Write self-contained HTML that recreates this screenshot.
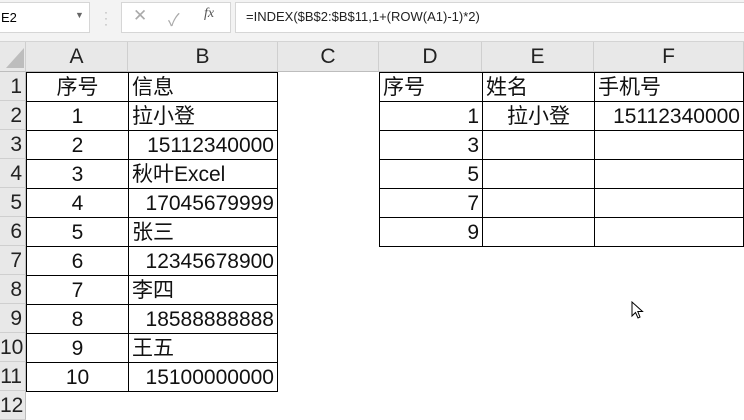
<!DOCTYPE html>
<html><head><meta charset="utf-8"><style>
body{margin:0;width:744px;height:404px;overflow:hidden;background:#fff;position:relative;font-family:"Liberation Sans","Noto Sans CJK SC",sans-serif}
.a{position:absolute;box-sizing:border-box}
.top{left:0;top:0;width:744px;height:42px;background:#f3f3f3;border-bottom:1px solid #d4d4d4}
.box{background:#fff;border:1px solid #d6d6d6;top:2px;height:31px}
.hdr{top:42px;height:30px;background:#e8e8e8;border-right:1px solid #cfcfcf;border-bottom:1px solid #bdbdbd;font-size:21px;color:#222;text-align:center;line-height:30px}
.rh{left:0;width:26px;height:29px;background:#e8e8e8;border-right:1px solid #bdbdbd;border-bottom:1px solid #cfcfcf;font-size:21px;color:#222;line-height:29px;text-align:right;padding-right:3px;overflow:hidden;white-space:nowrap}
.c{font-size:21px;line-height:29px;color:#111;border:1px solid #000;white-space:nowrap;overflow:hidden;height:30px}
.ce{text-align:center}.r{text-align:right;padding-right:3px}.l{padding-left:3px}
</style></head><body>
<div class="a top"></div>
<div class="a box" style="left:-2px;width:92px;font-size:13px;line-height:29px;padding-left:2px">E2</div>
<div class="a" style="left:75px;top:10px;font-size:9px;color:#666">▼</div>
<div class="a" style="left:104px;top:9px;font-size:12px;color:#aaa;line-height:6px">·<br>·<br>·</div>
<div class="a box" style="left:121px;width:110px"></div>
<div class="a" style="left:133px;top:6px;font-size:17px;color:#aaa">✕</div>
<div class="a" style="left:168px;top:6px;font-size:17px;color:#aaa">✓</div>
<div class="a" style="left:204px;top:6px;font-size:14px;color:#555;font-style:italic;font-family:'Liberation Serif',serif">fx</div>
<div class="a box" style="left:235px;width:512px;font-size:13px;line-height:27px;padding-left:10px;color:#222">=INDEX($B$2:$B$11,1+(ROW(A1)-1)*2)</div>
<div class="a hdr" style="left:0;width:26px"><svg width="24" height="28" style="position:absolute;left:2px;top:0"><polygon points="22,6 22,26 4,26" fill="#bdbdbd"/></svg></div>
<div class="a hdr" style="left:26px;width:102px">A</div>
<div class="a hdr" style="left:128px;width:150px">B</div>
<div class="a hdr" style="left:278px;width:101px">C</div>
<div class="a hdr" style="left:379px;width:103px">D</div>
<div class="a hdr" style="left:482px;width:112px">E</div>
<div class="a hdr" style="left:594px;width:150px">F</div>
<div class="a rh" style="top:72px">1</div>
<div class="a rh" style="top:101px">2</div>
<div class="a rh" style="top:130px">3</div>
<div class="a rh" style="top:159px">4</div>
<div class="a rh" style="top:188px">5</div>
<div class="a rh" style="top:217px">6</div>
<div class="a rh" style="top:246px">7</div>
<div class="a rh" style="top:275px">8</div>
<div class="a rh" style="top:304px">9</div>
<div class="a rh" style="top:333px">10</div>
<div class="a rh" style="top:362px">11</div>
<div class="a rh" style="top:391px">12</div>
<div class="a c ce" style="left:26px;top:72px;width:103px">序号</div><div class="a c l" style="left:128px;top:72px;width:150px">信息</div>
<div class="a c ce" style="left:26px;top:101px;width:103px">1</div><div class="a c l" style="left:128px;top:101px;width:150px">拉小登</div>
<div class="a c ce" style="left:26px;top:130px;width:103px">2</div><div class="a c r" style="left:128px;top:130px;width:150px">15112340000</div>
<div class="a c ce" style="left:26px;top:159px;width:103px">3</div><div class="a c l" style="left:128px;top:159px;width:150px">秋叶Excel</div>
<div class="a c ce" style="left:26px;top:188px;width:103px">4</div><div class="a c r" style="left:128px;top:188px;width:150px">17045679999</div>
<div class="a c ce" style="left:26px;top:217px;width:103px">5</div><div class="a c l" style="left:128px;top:217px;width:150px">张三</div>
<div class="a c ce" style="left:26px;top:246px;width:103px">6</div><div class="a c r" style="left:128px;top:246px;width:150px">12345678900</div>
<div class="a c ce" style="left:26px;top:275px;width:103px">7</div><div class="a c l" style="left:128px;top:275px;width:150px">李四</div>
<div class="a c ce" style="left:26px;top:304px;width:103px">8</div><div class="a c r" style="left:128px;top:304px;width:150px">18588888888</div>
<div class="a c ce" style="left:26px;top:333px;width:103px">9</div><div class="a c l" style="left:128px;top:333px;width:150px">王五</div>
<div class="a c ce" style="left:26px;top:362px;width:103px">10</div><div class="a c r" style="left:128px;top:362px;width:150px">15100000000</div>
<div class="a c l" style="left:379px;top:72px;width:104px">序号</div><div class="a c l" style="left:482px;top:72px;width:113px">姓名</div><div class="a c l" style="left:594px;top:72px;width:150px">手机号</div>
<div class="a c r" style="left:379px;top:101px;width:104px">1</div><div class="a c ce" style="left:482px;top:101px;width:113px">拉小登</div><div class="a c r" style="left:594px;top:101px;width:150px">15112340000</div>
<div class="a c r" style="left:379px;top:130px;width:104px">3</div><div class="a c" style="left:482px;top:130px;width:113px"></div><div class="a c" style="left:594px;top:130px;width:150px"></div>
<div class="a c r" style="left:379px;top:159px;width:104px">5</div><div class="a c" style="left:482px;top:159px;width:113px"></div><div class="a c" style="left:594px;top:159px;width:150px"></div>
<div class="a c r" style="left:379px;top:188px;width:104px">7</div><div class="a c" style="left:482px;top:188px;width:113px"></div><div class="a c" style="left:594px;top:188px;width:150px"></div>
<div class="a c r" style="left:379px;top:217px;width:104px">9</div><div class="a c" style="left:482px;top:217px;width:113px"></div><div class="a c" style="left:594px;top:217px;width:150px"></div>
<svg class="a" style="left:631px;top:301px" width="14" height="20"><path d="M1,1 L1,15 L4.5,11.5 L7,17 L9,16 L6.8,10.5 L11.5,10.5 Z" fill="#fff" stroke="#000" stroke-width="1"/></svg>
</body></html>
